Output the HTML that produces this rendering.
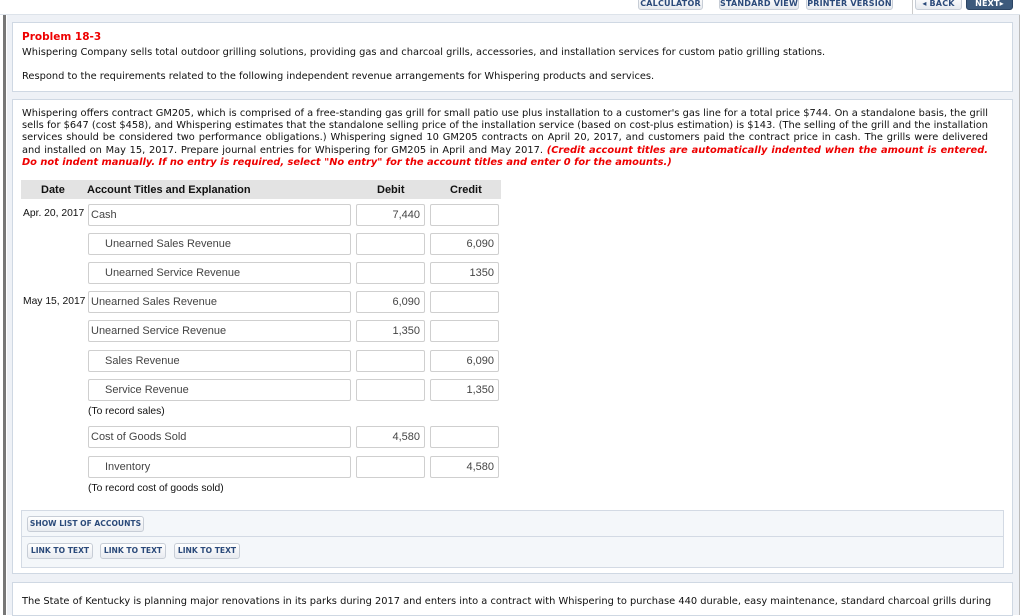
<!DOCTYPE html>
<html><head><meta charset="utf-8"><style>
*{box-sizing:border-box;margin:0;padding:0}
body{width:1024px;height:607px;overflow:hidden;background:#fff;position:relative;font-family:"DejaVu Sans",Verdana,sans-serif;color:#111}
.a{position:absolute}
.bg{left:7px;top:15px;width:1012px;height:600px;background:#eef1f6}
.lbar{left:3px;top:15px;width:3px;height:600px;background:#777}
.rbar{left:1019px;top:15px;width:1px;height:600px;background:#bbb}
.panel{background:#fff;border:1px solid #cfd8e3}
.btn{top:-4px;height:14px;border:1px solid #c7cdd6;border-radius:3px;background:linear-gradient(#fff,#e6e9ee);font:bold 8px "DejaVu Sans",sans-serif;color:#2b4a7a;text-align:center;line-height:13px;letter-spacing:.2px}
.t{font-size:9.85px;line-height:12.2px}
.in{height:22px;border:1px solid #cfcfcf;border-radius:2px;background:#fff;font:11px "Liberation Sans",Arial,sans-serif;color:#444;line-height:20px;padding:0 2px;white-space:nowrap}
.r{text-align:right;padding-right:4px}
.ind{padding-left:16px}
.d{font:10.3px "Liberation Sans",Arial,sans-serif;color:#111;left:23px}
.sb{height:16px;border:1px solid #c7cdd6;border-radius:3px;background:linear-gradient(#fff,#e8ebf0);font:bold 7.6px "DejaVu Sans",sans-serif;color:#2b4a7a;line-height:14px;text-align:center}
</style></head><body>
<div class="a bg"></div>
<div class="a lbar"></div>
<div class="a rbar"></div>
<div class="a" style="left:0;top:14px;width:1020px;height:1px;background:#dde3ea"></div>
<div class="a" style="left:912px;top:0;width:1px;height:14px;background:#ccc"></div>
<div class="a btn" style="left:638px;width:65px">CALCULATOR</div>
<div class="a btn" style="left:719px;width:80px">STANDARD VIEW</div>
<div class="a btn" style="left:806px;width:87px">PRINTER VERSION</div>
<div class="a btn" style="left:915px;width:47px">◂ BACK</div>
<div class="a btn" style="left:966px;width:47px;background:#3d5a7c;border-color:#2c4564;color:#fff">NEXT▸</div>

<div class="a panel" style="left:12px;top:22px;width:1001px;height:70px"></div>
<div class="a" style="left:22px;top:31px;font-weight:bold;font-size:10.5px;color:#e00">Problem 18-3</div>
<div class="a t" style="left:22px;top:47px;white-space:nowrap">Whispering Company sells total outdoor grilling solutions, providing gas and charcoal grills, accessories, and installation services for custom patio grilling stations.</div>
<div class="a t" style="left:22px;top:71px;white-space:nowrap">Respond to the requirements related to the following independent revenue arrangements for Whispering products and services.</div>

<div class="a panel" style="left:12px;top:99px;width:1001px;height:475px"></div>
<div class="a t" style="left:22px;top:108px;width:966px;text-align:justify">Whispering offers contract GM205, which is comprised of a free-standing gas grill for small patio use plus installation to a customer's gas line for a total price $744. On a standalone basis, the grill sells for $647 (cost $458), and Whispering estimates that the standalone selling price of the installation service (based on cost-plus estimation) is $143. (The selling of the grill and the installation services should be considered two performance obligations.) Whispering signed 10 GM205 contracts on April 20, 2017, and customers paid the contract price in cash. The grills were delivered and installed on May 15, 2017. Prepare journal entries for Whispering for GM205 in April and May 2017. <b style="color:#e00;font-style:italic">(Credit account titles are automatically indented when the amount is entered. Do not indent manually. If no entry is required, select "No entry" for the account titles and enter 0 for the amounts.)</b></div>

<div class="a" style="left:21px;top:180px;width:480px;height:19px;background:#e3e3e3"></div>
<div class="a" style="left:41px;top:184px;font:bold 11px 'Liberation Sans',Arial,sans-serif">Date</div>
<div class="a" style="left:87px;top:184px;font:bold 11px 'Liberation Sans',Arial,sans-serif">Account Titles and Explanation</div>
<div class="a" style="left:377px;top:184px;font:bold 11px 'Liberation Sans',Arial,sans-serif">Debit</div>
<div class="a" style="left:450px;top:184px;font:bold 11px 'Liberation Sans',Arial,sans-serif">Credit</div>

<div class="a d" style="top:208px">Apr. 20, 2017</div>
<div class="a in" style="left:88px;top:204px;width:263px">Cash</div>
<div class="a in r" style="left:356px;top:204px;width:69px">7,440</div>
<div class="a in" style="left:430px;top:204px;width:69px"></div>

<div class="a in ind" style="left:88px;top:233px;width:263px">Unearned Sales Revenue</div>
<div class="a in" style="left:356px;top:233px;width:69px"></div>
<div class="a in r" style="left:430px;top:233px;width:69px">6,090</div>

<div class="a in ind" style="left:88px;top:262px;width:263px">Unearned Service Revenue</div>
<div class="a in" style="left:356px;top:262px;width:69px"></div>
<div class="a in r" style="left:430px;top:262px;width:69px">1350</div>

<div class="a d" style="top:296px">May 15, 2017</div>
<div class="a in" style="left:88px;top:291px;width:263px">Unearned Sales Revenue</div>
<div class="a in r" style="left:356px;top:291px;width:69px">6,090</div>
<div class="a in" style="left:430px;top:291px;width:69px"></div>

<div class="a in" style="left:88px;top:320px;width:263px">Unearned Service Revenue</div>
<div class="a in r" style="left:356px;top:320px;width:69px">1,350</div>
<div class="a in" style="left:430px;top:320px;width:69px"></div>

<div class="a in ind" style="left:88px;top:350px;width:263px">Sales Revenue</div>
<div class="a in" style="left:356px;top:350px;width:69px"></div>
<div class="a in r" style="left:430px;top:350px;width:69px">6,090</div>

<div class="a in ind" style="left:88px;top:379px;width:263px">Service Revenue</div>
<div class="a in" style="left:356px;top:379px;width:69px"></div>
<div class="a in r" style="left:430px;top:379px;width:69px">1,350</div>

<div class="a d" style="left:88px;top:406px">(To record sales)</div>

<div class="a in" style="left:88px;top:426px;width:263px">Cost of Goods Sold</div>
<div class="a in r" style="left:356px;top:426px;width:69px">4,580</div>
<div class="a in" style="left:430px;top:426px;width:69px"></div>

<div class="a in ind" style="left:88px;top:456px;width:263px">Inventory</div>
<div class="a in" style="left:356px;top:456px;width:69px"></div>
<div class="a in r" style="left:430px;top:456px;width:69px">4,580</div>

<div class="a d" style="left:88px;top:483px">(To record cost of goods sold)</div>

<div class="a" style="left:21px;top:510px;width:983px;height:27px;background:#f4f7fa;border:1px solid #d3dae4"></div>
<div class="a" style="left:21px;top:536px;width:983px;height:32px;background:#f4f7fa;border:1px solid #d3dae4"></div>
<div class="a sb" style="left:27px;top:516px;width:117px">SHOW LIST OF ACCOUNTS</div>
<div class="a sb" style="left:27px;top:543px;width:66px">LINK TO TEXT</div>
<div class="a sb" style="left:100px;top:543px;width:66px">LINK TO TEXT</div>
<div class="a sb" style="left:174px;top:543px;width:66px">LINK TO TEXT</div>

<div class="a panel" style="left:12px;top:582px;width:1001px;height:34px"></div>
<div class="a t" style="left:22px;top:596px;white-space:nowrap">The State of Kentucky is planning major renovations in its parks during 2017 and enters into a contract with Whispering to purchase 440 durable, easy maintenance, standard charcoal grills during</div>
</body></html>
